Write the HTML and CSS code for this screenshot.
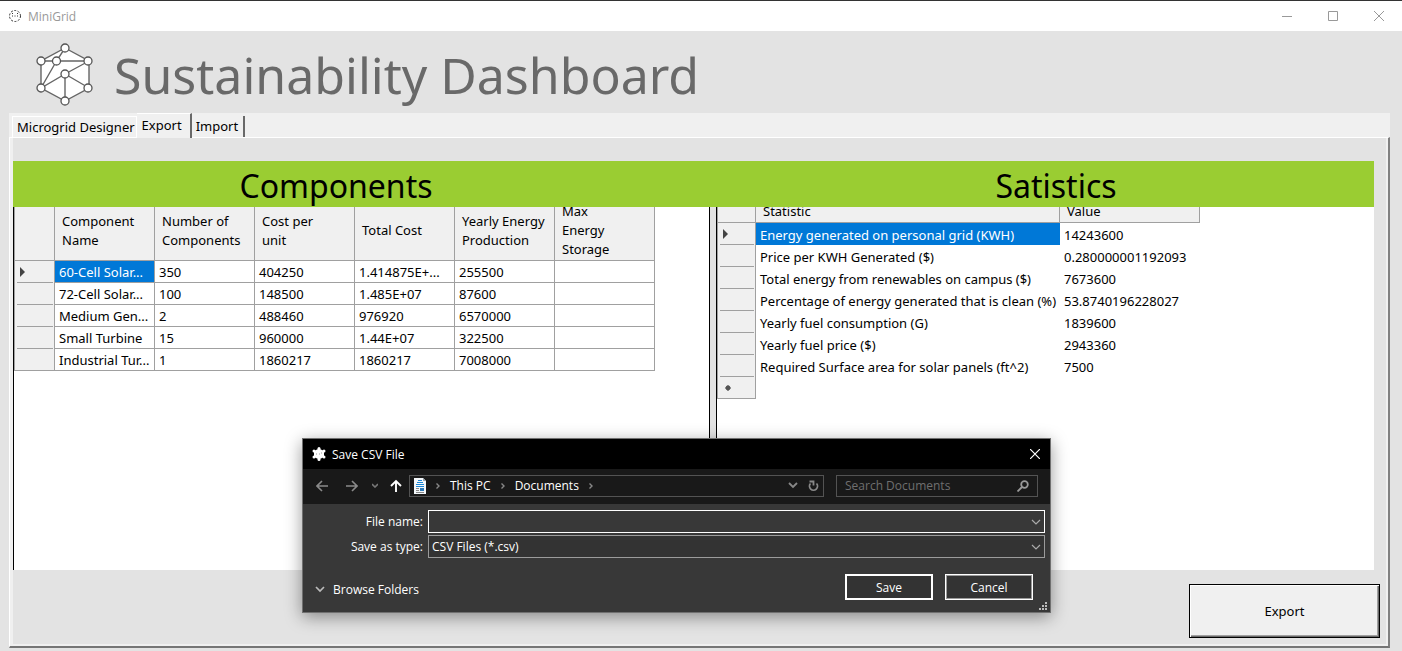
FILE: index.html
```html
<!DOCTYPE html>
<html lang="en">
<head>
<meta charset="utf-8">
<title>MiniGrid</title>
<link rel="stylesheet" href="styles.css">
</head>
<body>
<header class="titlebar">
  <svg class="app-icon" width="14" height="14" viewBox="0 0 14 14" fill="none" stroke="#333" aria-hidden="true"><circle cx="7" cy="7" r="5.5" stroke-dasharray="2 1.5"/><path d="M4 7h1M6.500 7h1M9 7h1M4 4.500h1M9 4.500h1"/></svg>
  <span class="titlebar-text">MiniGrid</span>
  <div class="window-controls">
    <button type="button" class="window-btn" aria-label="Minimize"><svg width="10" height="10" viewBox="0 0 10 10"><path d="M0 5.500h10" stroke="#999"/></svg></button>
    <button type="button" class="window-btn" aria-label="Maximize"><svg width="10" height="10" viewBox="0 0 10 10"><path d="M.5.5h9v9h-9z" stroke="#999" fill="none"/></svg></button>
    <button type="button" class="window-btn" aria-label="Close"><svg width="10" height="10" viewBox="0 0 10 10"><path d="M0 0l10 10M10 0L0 10" stroke="#999"/></svg></button>
  </div>
</header>

<div class="brand">
  <svg class="brand-logo" width="58" height="64" viewBox="0 0 58 64" aria-hidden="true">
    <path d="M29 5L53 18v27L29 58 5 45V18z" fill="#fff" stroke="#666" stroke-width="1.400"/>
    <path d="M5 18h48L29 31 5 45 20.500 18 29 5M29 31v27M29 31l24 14" fill="none" stroke="#666" stroke-width="1.400"/>
    <g fill="#fff" stroke="#555" stroke-width="1.300"><circle cx="29" cy="5" r="4"/><circle cx="5" cy="18" r="4"/><circle cx="20.500" cy="18" r="4"/><circle cx="52" cy="18" r="4"/><circle cx="29" cy="31" r="4"/><circle cx="5" cy="45" r="4"/><circle cx="52" cy="45" r="4"/><circle cx="29" cy="58" r="4"/></g>
  </svg>
  <h1 class="brand-title">Sustainability Dashboard</h1>
</div>

<main class="workspace">
  <div class="tabs" role="tablist">
    <button type="button" class="tab tab-first" role="tab">Microgrid Designer</button>
    <button type="button" class="tab tab-active" role="tab" aria-selected="true">Export</button>
    <button type="button" class="tab" role="tab">Import</button>
  </div>
  <section class="panel">
    <div class="report">
      <div class="banner">
        <h2 class="banner-title">Components</h2>
        <h2 class="banner-title">Satistics</h2>
      </div>
      <div class="split">
        <div class="pane pane-left">
          <table class="grid components">
            <colgroup><col class="col-row"><col><col><col><col><col><col></colgroup>
            <thead><tr><th></th><th>Component Name</th><th>Number of Components</th><th>Cost per<br>unit</th><th>Total Cost</th><th>Yearly Energy Production</th><th>Max<br>Energy<br>Storage</th></tr></thead>
            <tbody>
              <tr><th><div class="row-head"><svg width="5" height="10" viewBox="0 0 5 10"><path d="M0 0l5 5-5 5z" fill="#444"/></svg></div></th><td class="selected">60-Cell Solar...</td><td>350</td><td>404250</td><td>1.414875E+...</td><td>255500</td><td></td></tr>
              <tr><th><div class="row-head"></div></th><td>72-Cell Solar...</td><td>100</td><td>148500</td><td>1.485E+07</td><td>87600</td><td></td></tr>
              <tr><th><div class="row-head"></div></th><td>Medium Gen...</td><td>2</td><td>488460</td><td>976920</td><td>6570000</td><td></td></tr>
              <tr><th><div class="row-head"></div></th><td>Small Turbine</td><td>15</td><td>960000</td><td>1.44E+07</td><td>322500</td><td></td></tr>
              <tr><th class="last"><div class="row-head"></div></th><td>Industrial Tur...</td><td>1</td><td>1860217</td><td>1860217</td><td>7008000</td><td></td></tr>
            </tbody>
          </table>
        </div>
        <div class="pane pane-right">
          <table class="grid statistics">
            <colgroup><col class="col-row"><col class="col-stat"><col class="col-value"></colgroup>
            <thead><tr><th></th><th>Statistic</th><th>Value</th></tr></thead>
            <tbody>
              <tr><th><div class="row-head"><svg width="5" height="10" viewBox="0 0 5 10"><path d="M0 0l5 5-5 5z" fill="#444"/></svg></div></th><td class="selected">Energy generated on personal grid (KWH)</td><td>14243600</td></tr>
              <tr><th><div class="row-head"></div></th><td>Price per KWH Generated ($)</td><td>0.280000001192093</td></tr>
              <tr><th><div class="row-head"></div></th><td>Total energy from renewables on campus ($)</td><td>7673600</td></tr>
              <tr><th><div class="row-head"></div></th><td>Percentage of energy generated that is clean (%)</td><td>53.8740196228027</td></tr>
              <tr><th><div class="row-head"></div></th><td>Yearly fuel consumption (G)</td><td>1839600</td></tr>
              <tr><th><div class="row-head"></div></th><td>Yearly fuel price ($)</td><td>2943360</td></tr>
              <tr><th><div class="row-head"></div></th><td>Required Surface area for solar panels (ft^2)</td><td>7500</td></tr>
              <tr><th class="last"><div class="row-head new-row"><svg width="6" height="6" viewBox="0 0 6 6"><circle cx="3" cy="3" r="2.400" fill="#555"/><path d="M3 0v6M0 3h6" stroke="#555"/></svg></div></th><td></td><td></td></tr>
            </tbody>
          </table>
        </div>
      </div>
    </div>
    <div class="actions"><button type="button" class="export-btn">Export</button></div>
  </section>
</main>

<form class="dialog" role="dialog" aria-labelledby="dialog-title">
  <div class="dialog-titlebar">
    <svg width="14" height="14" viewBox="0 0 14 14" aria-hidden="true"><path d="M7 1.500l5 2.500v6l-5 2.500L2 10V4z" fill="#fff"/><g fill="#fff"><circle cx="7" cy="1.500" r="1.500"/><circle cx="2" cy="4" r="1.500"/><circle cx="12" cy="4" r="1.500"/><circle cx="2" cy="10" r="1.500"/><circle cx="12" cy="10" r="1.500"/><circle cx="7" cy="12.500" r="1.500"/></g><path d="M4 7h1M7 7h1M9 6h1" stroke="#999"/></svg>
    <span id="dialog-title" class="dialog-title">Save CSV File</span>
    <button type="button" class="icon-btn" aria-label="Close dialog"><svg width="10" height="10" viewBox="0 0 10 10"><path d="M0 0l10 10M10 0L0 10" stroke="#fff" stroke-width="1.200"/></svg></button>
  </div>
  <div class="dialog-nav">
    <div class="nav-buttons">
      <button type="button" class="icon-btn" aria-label="Back"><svg width="12" height="12" viewBox="0 0 12 12" fill="none" stroke="#8a8a8a" stroke-width="1.600"><path d="M12 6H1M6 1L1 6l5 5"/></svg></button>
      <button type="button" class="icon-btn" aria-label="Forward"><svg width="12" height="12" viewBox="0 0 12 12" fill="none" stroke="#8a8a8a" stroke-width="1.600"><path d="M0 6h11M6 1l5 5-5 5"/></svg></button>
      <button type="button" class="icon-btn" aria-label="Recent locations"><svg width="6" height="5" viewBox="0 0 6 5" fill="none" stroke="#777" stroke-width="1.600"><path d="M0 1l3 3 3-3"/></svg></button>
      <button type="button" class="icon-btn" aria-label="Up"><svg width="12" height="13" viewBox="0 0 12 13" fill="none" stroke="#fff" stroke-width="1.900"><path d="M6 13V2M1 7l5-5 5 5"/></svg></button>
    </div>
    <div class="address">
      <svg width="12" height="16" viewBox="0 0 12 16" aria-hidden="true"><path d="M0 0h9l3 3v13H0z" fill="#f4f8fb"/><path d="M9 0v3h3" fill="#9aa5ad"/><path d="M4 2h4v1H4zM3 4h6v1H3zM2 6h8v1H2zM2 8h8v1H2z" fill="#1b87d6"/><path d="M2 10h3v1H2zM2 12h3v1H2zM2 14h8v1H2z" fill="#888"/><path d="M6 10h4v3H6z" fill="#2b78b8"/></svg>
      <svg class="crumb-arrow" width="4" height="6" viewBox="0 0 4 6" fill="none" stroke="#888" stroke-width="1.400"><path d="M.5.500L3 3 .5 5.500"/></svg>
      <span>This PC</span>
      <svg class="crumb-arrow" width="4" height="6" viewBox="0 0 4 6" fill="none" stroke="#888" stroke-width="1.400"><path d="M.5.500L3 3 .5 5.500"/></svg>
      <span>Documents</span>
      <svg class="crumb-arrow" width="4" height="6" viewBox="0 0 4 6" fill="none" stroke="#888" stroke-width="1.400"><path d="M.5.500L3 3 .5 5.500"/></svg>
      <button type="button" class="icon-btn push" aria-label="Previous locations"><svg width="10" height="7" viewBox="0 0 10 7" fill="none" stroke="#888" stroke-width="1.800"><path d="M1 1l4 4 4-4"/></svg></button>
      <button type="button" class="icon-btn" aria-label="Refresh"><svg width="11" height="12" viewBox="0 0 11 12" fill="none" stroke="#888" stroke-width="1.800"><path d="M8.500 3.500A4 4 0 1 1 2.500 3.500M1.500 1.500H5.500V5.500"/></svg></button>
    </div>
    <div class="search">
      <input type="search" class="search-input" aria-label="Search Documents" placeholder="Search Documents">
      <svg width="12" height="12" viewBox="0 0 12 12" fill="none" stroke="#999" stroke-width="1.800"><circle cx="7.500" cy="4.500" r="3.300"/><path d="M5 7L.5 11.500"/></svg>
    </div>
  </div>
  <div class="fields">
    <label for="file-name">File name:</label>
    <div class="combo combo-focus">
      <input type="text" id="file-name" class="combo-control">
      <svg class="combo-arrow" width="10" height="6" viewBox="0 0 10 6" fill="none" stroke="#aaa" stroke-width="1.200"><path d="M1 1l4 4 4-4"/></svg>
    </div>
    <label for="file-type">Save as type:</label>
    <div class="combo">
      <select id="file-type" class="combo-control"><option>CSV Files (*.csv)</option></select>
      <svg class="combo-arrow" width="10" height="6" viewBox="0 0 10 6" fill="none" stroke="#aaa" stroke-width="1.200"><path d="M1 1l4 4 4-4"/></svg>
    </div>
  </div>
  <div class="dialog-footer">
    <button type="button" class="browse"><svg width="10" height="7" viewBox="0 0 10 7" fill="none" stroke="#bbb" stroke-width="1.700"><path d="M1 1l4 4 4-4"/></svg>Browse Folders</button>
    <button type="button" class="dialog-btn dialog-btn-default">Save</button>
    <button type="button" class="dialog-btn">Cancel</button>
  </div>
  <svg class="grip" width="9" height="9" viewBox="0 0 9 9" fill="#bbb"><path d="M6 0h2v2H6zM6 3h2v2H6zM6 6h2v2H6zM3 3h2v2H3zM3 6h2v2H3zM0 6h2v2H0z"/></svg>
</form>
</body>
</html>
```
FILE: styles.css
```css
* { box-sizing: border-box; }

body {
  margin: 0;
  height: 100vh;
  display: flex;
  flex-direction: column;
  position: relative;
  overflow: hidden;
  background: #e3e3e3;
  color: #000;
  font-family: "Noto Sans", "Open Sans", sans-serif;
  font-size: 13px;
}

button, input, select { font: inherit; color: inherit; }
h1, h2 { margin: 0; font-weight: 400; }
svg { display: block; flex: none; }

/* window title bar */
.titlebar {
  display: flex;
  align-items: center;
  height: 31px;
  flex: none;
  padding-left: 8px;
  gap: 6px;
  background: #fff;
  border-top: 1px solid #333;
  color: #999;
  font-family: "Open Sans", "Noto Sans", sans-serif;
  font-size: 12px;
}
.window-controls { display: flex; margin-left: auto; height: 100%; }
.window-btn {
  display: flex;
  align-items: center;
  justify-content: center;
  width: 46px;
  padding: 0;
  border: 0;
  background: none;
}

.brand {
  display: flex;
  align-items: center;
  height: 82px;
  flex: none;
  gap: 20px;
  padding: 6px 36px 0;
}
.brand-title { color: #696969; font-size: 50px; line-height: 72px; white-space: nowrap; }

/* tab control */
.workspace {
  flex: 1;
  display: flex;
  flex-direction: column;
  margin: 0 12px 3px 9px;
  min-height: 0;
}
.tabs {
  display: flex;
  align-items: flex-end;
  height: 24px;
  flex: none;
  padding-left: 3px;
  background: #f0f0f0;
}
.tab {
  height: 21px;
  padding: 0 5px 0 4px;
  border: 0;
  border-right: 2px solid #696969;
  background: #f0f0f0;
  line-height: 21px;
  white-space: nowrap;
}
.tab-first { padding: 0 1px 0 4px; border-top: 1px solid #fff; border-left: 1px solid #fff; border-right: 1px solid #fff; }
.tab-active {
  height: 25px;
  margin-bottom: -1px;
  padding: 0 8px 2px 5px;
  border-top: 1px solid #fff;
  z-index: 1;
}
.panel {
  flex: 1;
  display: flex;
  flex-direction: column;
  min-height: 0;
  padding: 23px 14px 8px 3px;
  border: solid;
  border-width: 1px 2px 2px 1px;
  border-color: #fff #808080 #757575 #fff;
  box-shadow: inset 3px 0 #f0f0f0, inset -2px -2px #f0f0f0;
}

/* report area */
.report { flex: 1; display: flex; flex-direction: column; min-height: 0; }
.banner {
  display: grid;
  grid-template-columns: 646px 636px;
  justify-content: space-between;
  height: 46px;
  flex: none;
  background: #9acd32;
}
.banner-title { padding-top: 2px; font-size: 32px; line-height: 46px; text-align: center; }
.split { flex: 1; display: grid; grid-template-columns: 697px 1fr; gap: 6px; min-height: 0; }
.pane { overflow: hidden; background: #fff; border-left: 1px solid #000; }
.pane-left { border-right: 1px solid #000; }

.grid {
  margin-top: -6px;
  table-layout: fixed;
  border-collapse: separate;
  border-spacing: 0;
  border-left: 1px solid #a0a0a0;
}
.grid th { font-weight: 400; text-align: left; background: #f0f0f0; border-right: 1px solid #a0a0a0; }
.grid thead th { padding: 0 7px; border-bottom: 1px solid #a0a0a0; line-height: 19px; }
.grid tbody th { padding: 0; }
.grid td {
  height: 22px;
  padding: 1px 0 0 4px;
  line-height: 20px;
  white-space: nowrap;
}
.grid .selected { background: #0078d7; color: #fff; }
.grid .last { border-bottom: 1px solid #a0a0a0; }
.row-head { display: flex; align-items: center; height: 22px; margin: 0 1px 0 2px; padding-left: 3px; border-bottom: 1px solid #a0a0a0; }
.new-row { padding-left: 5px; }
.last .row-head { height: 21px; border-bottom: 0; }

.components { width: 641px; }
.components .col-row { width: 40px; }
.components thead th { height: 60px; }
.components td { border-right: 1px solid #a0a0a0; border-bottom: 1px solid #a0a0a0; }

.statistics { width: 483px; }
.statistics .col-row { width: 38px; }
.statistics .col-stat { width: 304px; }
.statistics thead th { height: 22px; }

.actions { display: flex; justify-content: flex-end; flex: none; padding-top: 14px; margin-right: -6px; }
.export-btn {
  width: 191px;
  height: 54px;
  border: 1px solid #000;
  background: #f0f0f0;
  box-shadow: inset 1px 1px #fff, inset -1px -1px #696969, inset -2px -2px #a0a0a0;
}

/* save dialog */
.dialog {
  position: absolute;
  left: 302px;
  top: 438px;
  width: 749px;
  border: 1px solid #707070;
  background: #383838;
  box-shadow: 0 4px 16px rgba(0, 0, 0, .4);
  color: #fff;
  font-family: "Open Sans", "Noto Sans", sans-serif;
  font-size: 12px;
}
.icon-btn { display: flex; padding: 0; border: 0; background: none; }
.dialog-titlebar { display: flex; align-items: center; gap: 6px; height: 30px; padding: 0 10px 0 9px; background: #000; }
.dialog-titlebar .icon-btn { margin-left: auto; }
.dialog-nav { display: flex; align-items: center; height: 35px; padding: 0 12px 2px 13px; background: #191919; }
.nav-buttons { display: flex; align-items: center; width: 93px; gap: 18px; }
.nav-buttons .icon-btn:nth-child(3) { margin: 0 -6px 0 -4px; }
.address { flex: 1; display: flex; align-items: center; height: 22px; gap: 10px; padding: 0 4px; border: 1px solid #535353; }
.address .push { margin-left: auto; }
.search { display: flex; align-items: center; width: 202px; height: 22px; margin-left: 12px; padding: 0 8px; border: 1px solid #535353; }
.search-input { flex: 1; min-width: 0; padding: 0; border: 0; background: none; outline: 0; }
.search-input::placeholder { color: #6f6f6f; opacity: 1; }
.fields {
  display: grid;
  grid-template-columns: 115px 1fr;
  align-items: center;
  gap: 2px 5px;
  padding: 6px 5px 0;
}
.fields label { text-align: right; }
.combo { display: flex; align-items: center; height: 23px; padding-right: 3px; border: 1px solid #9b9b9b; background: #333; }
.combo-focus { border-color: #fff; background: #383838; }
.combo-control { flex: 1; min-width: 0; height: 100%; padding: 0 3px; border: 0; outline: 0; background: none; appearance: none; }
.dialog-footer { display: flex; align-items: center; gap: 12px; padding: 16px 17px 12px 12px; }
.browse { display: flex; align-items: center; gap: 8px; margin-right: auto; padding: 5px 0 0; border: 0; background: none; }
.dialog-btn { width: 88px; height: 26px; padding: 0; border: 1px solid #fff; background: #333; box-shadow: inset 0 0 0 1px #9b9b9b; }
.dialog-btn-default { box-shadow: inset 0 0 0 1px #fff; }
.grip { position: absolute; right: 2px; bottom: 1px; }
```
